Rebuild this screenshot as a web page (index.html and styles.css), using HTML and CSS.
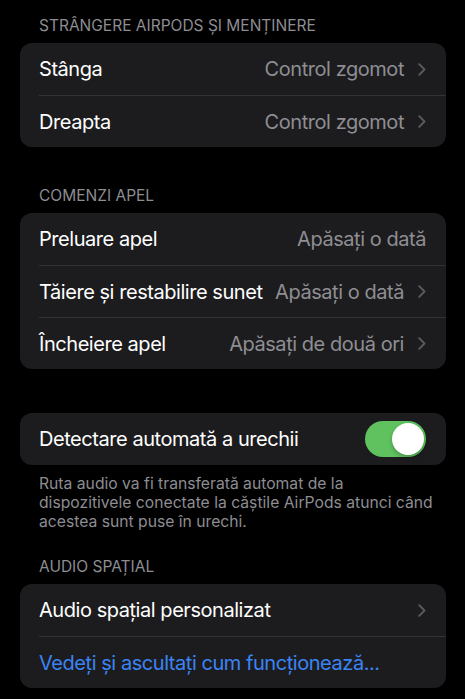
FILE: index.html
```html
<!DOCTYPE html>
<html lang="ro">
<head>
<meta charset="utf-8">
<title>AirPods</title>
<link rel="stylesheet" href="styles.css">
</head>
<body>
<div class="page">
  <div class="section-header">STRÂNGERE AIRPODS ȘI MENȚINERE</div>
  <div class="card">
    <div class="row"><div class="row-body">
      <span class="label">Stânga</span>
      <span class="value">Control zgomot</span>
      <svg class="chev" width="8" height="13" viewBox="0 0 8 13"><polyline points="1.2,1.2 6.5,6.5 1.2,11.8" fill="none" stroke="#5a5a5f" stroke-width="1.9" stroke-linecap="round" stroke-linejoin="round"/></svg>
    </div></div>
    <div class="row"><div class="row-body sep">
      <span class="label">Dreapta</span>
      <span class="value">Control zgomot</span>
      <svg class="chev" width="8" height="13" viewBox="0 0 8 13"><polyline points="1.2,1.2 6.5,6.5 1.2,11.8" fill="none" stroke="#5a5a5f" stroke-width="1.9" stroke-linecap="round" stroke-linejoin="round"/></svg>
    </div></div>
  </div>

  <div class="section-header gap-lg">COMENZI APEL</div>
  <div class="card">
    <div class="row"><div class="row-body">
      <span class="label">Preluare apel</span>
      <span class="value">Apăsați o dată</span>
    </div></div>
    <div class="row"><div class="row-body sep">
      <span class="label">Tăiere și restabilire sunet</span>
      <span class="value">Apăsați o dată</span>
      <svg class="chev" width="8" height="13" viewBox="0 0 8 13"><polyline points="1.2,1.2 6.5,6.5 1.2,11.8" fill="none" stroke="#5a5a5f" stroke-width="1.9" stroke-linecap="round" stroke-linejoin="round"/></svg>
    </div></div>
    <div class="row"><div class="row-body sep">
      <span class="label">Încheiere apel</span>
      <span class="value">Apăsați de două ori</span>
      <svg class="chev" width="8" height="13" viewBox="0 0 8 13"><polyline points="1.2,1.2 6.5,6.5 1.2,11.8" fill="none" stroke="#5a5a5f" stroke-width="1.9" stroke-linecap="round" stroke-linejoin="round"/></svg>
    </div></div>
  </div>

  <div class="card gap-xl">
    <div class="row"><div class="row-body">
      <span class="label">Detectare automată a urechii</span>
      <span class="toggle"><span class="knob"></span></span>
    </div></div>
  </div>
  <div class="footer">Ruta audio va fi transferată automat de la dispozitivele conectate la căștile AirPods atunci când acestea sunt puse în urechi.</div>

  <div class="section-header gap-md">AUDIO SPAȚIAL</div>
  <div class="card">
    <div class="row"><div class="row-body">
      <span class="label">Audio spațial personalizat</span>
      <span class="value"></span>
      <svg class="chev" width="8" height="13" viewBox="0 0 8 13"><polyline points="1.2,1.2 6.5,6.5 1.2,11.8" fill="none" stroke="#5a5a5f" stroke-width="1.9" stroke-linecap="round" stroke-linejoin="round"/></svg>
    </div></div>
    <div class="row"><div class="row-body sep">
      <span class="label link">Vedeți și ascultați cum funcționează...</span>
    </div></div>
  </div>
</div>
</body>
</html>
```

FILE: styles.css
```css
html, body {
  margin: 0;
  padding: 0;
  background: #000;
}
body {
  font-family: Inter, "Noto Sans", "Liberation Sans", sans-serif;
  color: #fff;
  -webkit-font-smoothing: antialiased;
}
.page {
  padding: 17px 19px 0 20px;
}
.section-header {
  padding-left: 19px;
  font-size: 15.5px;
  line-height: 18px;
  color: #8d8d92;
  margin-bottom: 8px;
}
.gap-lg { margin-top: 40px; }
.gap-md { margin-top: 27px; }
.gap-xl { margin-top: 44px; }
.card {
  background: #1c1c1e;
  border-radius: 12px;
  overflow: hidden;
}
.row {
  padding-left: 19px;
}
.row-body {
  display: flex;
  align-items: center;
  height: 52px;
  box-sizing: border-box;
  padding-right: 20px;
}
.row-body.sep {
  border-top: 1px solid #323235;
}
.label {
  font-size: 20px;
  letter-spacing: -0.45px;
  white-space: nowrap;
}
.value {
  margin-left: auto;
  font-size: 20px;
  letter-spacing: -0.45px;
  color: #8e8e93;
  white-space: nowrap;
}
.chev {
  margin-left: 14px;
  flex: none;
}
.link {
  color: #3b84f5;
}
.toggle {
  margin-left: auto;
  width: 61px;
  height: 36px;
  border-radius: 18px;
  background: #5fc25f;
  display: flex;
  align-items: center;
  justify-content: flex-end;
  padding: 2px;
  box-sizing: border-box;
}
.knob {
  width: 32px;
  height: 32px;
  border-radius: 50%;
  background: #fff;
  box-shadow: 0 2px 4px rgba(0,0,0,0.25);
}
.footer {
  margin-top: 9px;
  padding: 0 6px 0 19px;
  font-size: 15.7px;
  line-height: 19px;
  color: #8d8d92;
}
```
